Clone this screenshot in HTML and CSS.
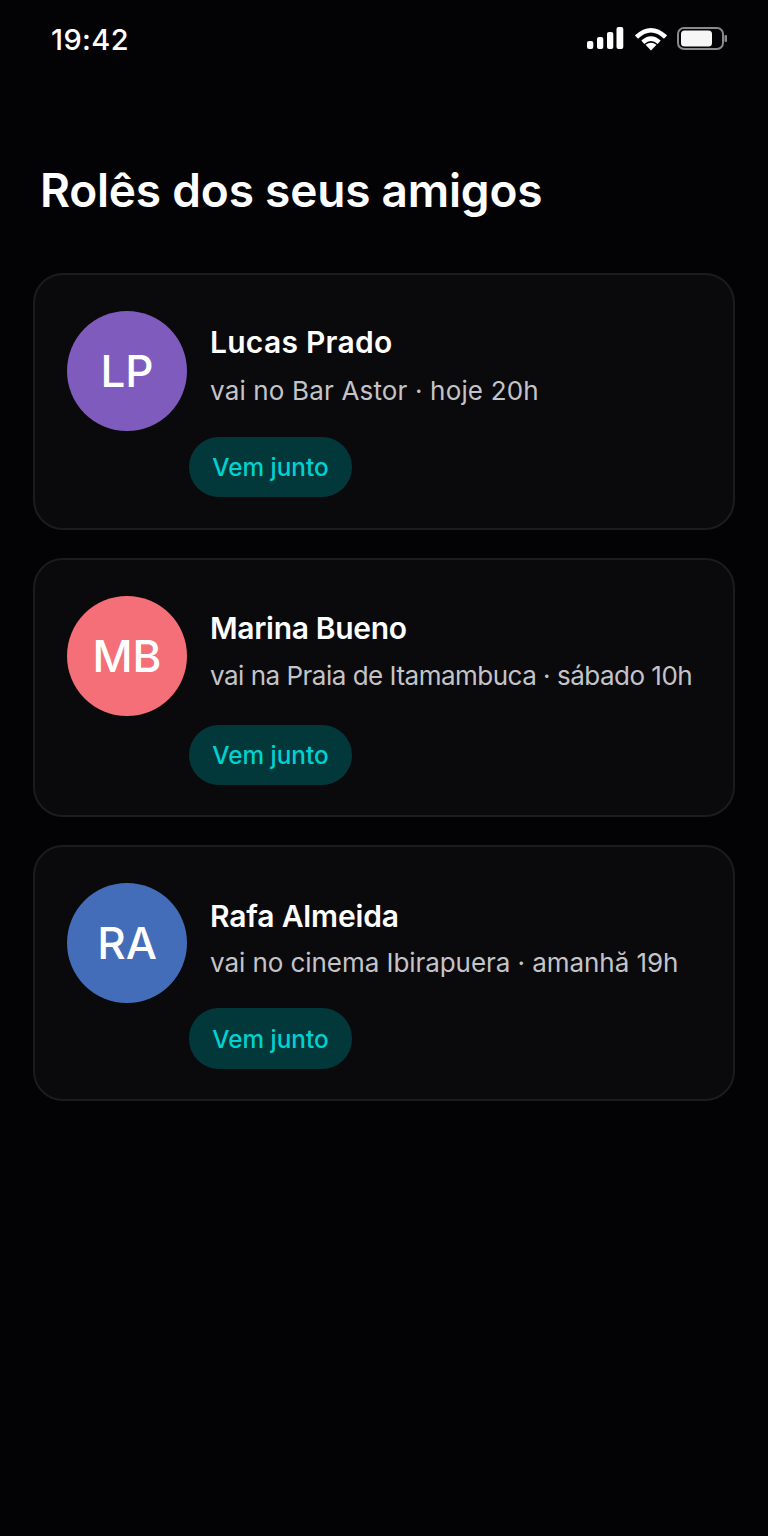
FILE: index.html
```html
<!DOCTYPE html>
<html lang="pt-BR">
<head>
<meta charset="utf-8">
<title>Rolês dos seus amigos</title>
<link rel="stylesheet" href="styles.css">
</head>
<body>
<div class="status">
  <span class="time">19:42</span>
  <div class="status-icons">
    <svg class="sig" width="37" height="24" viewBox="0 0 37 24"><rect x="0" y="14" width="6.300" height="8" rx="2"/><rect x="10" y="10" width="6.300" height="12" rx="2"/><rect x="20" y="5" width="6.300" height="17" rx="2"/><rect x="29.500" y="0" width="6.800" height="22" rx="2"/></svg>
    <svg class="wifi" width="32" height="24" viewBox="0 0 32 24"><path class="arc" d="M1.500 10Q16 -3.500 30.500 10"/><path class="arc" d="M7.800 15.200Q16 8 24.200 15.200"/><path d="M16 23.500L10.500 17.800Q16 13.600 21.500 17.800Z"/></svg>
    <svg class="batt" width="50" height="24" viewBox="0 0 50 24"><rect x="1" y="1" width="45" height="21" rx="6" fill="none" stroke="#8a8a8a" stroke-width="2"/><rect x="4" y="3.500" width="31" height="16" rx="3.500" fill="#f6f6f6"/><rect x="47.500" y="8" width="2.500" height="7" rx="1" fill="#8a8a8a"/></svg>
  </div>
</div>
<h1 class="title">Rolês dos seus amigos</h1>
<main class="list">
  <article class="card card-first">
    <div class="row">
      <div class="avatar purple">LP</div>
      <div class="info">
        <div class="name">Lucas Prado</div>
        <div class="sub">vai no Bar Astor · hoje 20h</div>
      </div>
    </div>
    <button class="btn">Vem junto</button>
  </article>
  <article class="card card-tall">
    <div class="row">
      <div class="avatar coral">MB</div>
      <div class="info">
        <div class="name">Marina Bueno</div>
        <div class="sub">vai na Praia de Itamambuca · sábado 10h</div>
      </div>
    </div>
    <button class="btn">Vem junto</button>
  </article>
  <article class="card card-last">
    <div class="row">
      <div class="avatar blue">RA</div>
      <div class="info">
        <div class="name">Rafa Almeida</div>
        <div class="sub">vai no cinema Ibirapuera · amanhă 19h</div>
      </div>
    </div>
    <button class="btn">Vem junto</button>
  </article>
</main>
</body>
</html>
```
FILE: styles.css
```css
* { box-sizing: border-box; }
html, body { margin: 0; padding: 0; }
body {
  width: 768px;
  height: 1536px;
  background: #030305;
  color: #fff;
  font-family: Inter, "Liberation Sans", sans-serif;
  overflow: hidden;
}
.status {
  height: 78px;
  padding: 0 41px 0 51px;
  display: flex;
  align-items: center;
  justify-content: space-between;
}
.time { font-size: 29px; font-weight: 500; letter-spacing: 0.4px; }
.status-icons { display: flex; align-items: center; gap: 10.5px; }
.sig, .wifi { fill: #fff; }
.wifi .arc { fill: none; stroke: #fff; stroke-width: 4.5; }
.title {
  margin: 82px 0 0 40px;
  font-size: 46px;
  line-height: 60px;
  font-weight: 600;
  letter-spacing: -0.2px;
}
.list {
  margin: 53px 33px 0;
  display: flex;
  flex-direction: column;
  gap: 28px;
}
.card {
  border: 2px solid #1c1c1f;
  border-radius: 30px;
  background: #0a0a0c;
  padding: 36px 32px 0;
}
.card-first { height: 257px; }
.card-tall { height: 259px; }
.card-last { height: 256px; }
.row { display: flex; align-items: flex-start; gap: 23px; }
.avatar {
  width: 120px;
  height: 120px;
  border-radius: 50%;
  flex: none;
  display: flex;
  align-items: center;
  justify-content: center;
  font-size: 44px;
  font-weight: 450;
  color: #fff;
}
.purple { background: #7e5bbd; }
.coral { background: #f56f78; }
.blue { background: #436db8; }
.info { padding-top: 12px; }
.name { font-size: 30px; line-height: 38px; font-weight: 600; }
.sub { font-size: 26px; line-height: 40px; margin-top: 10px; color: #c4c4c8; white-space: nowrap; }
.card-first .name { letter-spacing: 0.27px; }
.card-first .sub { letter-spacing: 0.16px; }
.card-tall .info { padding-top: 13px; }
.card-tall .name { letter-spacing: -0.33px; }
.card-tall .sub { margin-top: 9px; letter-spacing: -0.5px; }
.card-last .info { padding-top: 14px; }
.card-last .name { letter-spacing: -0.17px; }
.card-last .sub { margin-top: 8px; letter-spacing: -0.06px; }
.btn {
  display: block;
  margin: 6px 0 0 122px;
  width: 163px;
  height: 60px;
  border: 0;
  border-radius: 30px;
  background: #03383a;
  color: #00d1d1;
  font-family: inherit;
  font-size: 24.300px;
  font-weight: 500;
  padding: 0;
}
.card-tall .btn { margin-top: 9px; }
.card-last .btn { margin-top: 5px; height: 61px; }
```
